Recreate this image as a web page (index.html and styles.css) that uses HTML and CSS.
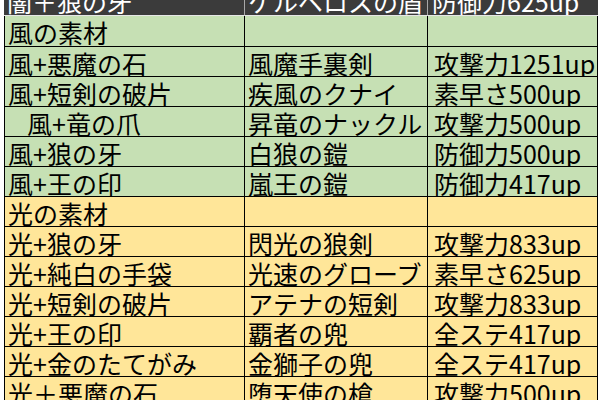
FILE: index.html
```html
<!DOCTYPE html>
<html lang="ja">
<head>
<meta charset="utf-8">
<title>素材表</title>
<link rel="stylesheet" href="styles.css">
</head>
<body>
<table class="sheet">
  <colgroup>
    <col class="c1"><col class="c2"><col class="c3">
  </colgroup>
  <thead>
    <tr class="head">
      <th>闇＋狼の牙</th><th>ケルベロスの盾</th><th class="stat">防御力625up</th>
    </tr>
  </thead>
  <tbody>
    <tr class="wind"><td>風の素材</td><td></td><td class="stat"></td></tr>
    <tr class="wind"><td>風+悪魔の石</td><td>風魔手裏剣</td><td class="stat">攻撃力1251up</td></tr>
    <tr class="wind"><td>風+短剣の破片</td><td>疾風のクナイ</td><td class="stat">素早さ500up</td></tr>
    <tr class="wind"><td class="indent">風+竜の爪</td><td>昇竜のナックル</td><td class="stat">攻撃力500up</td></tr>
    <tr class="wind"><td>風+狼の牙</td><td>白狼の鎧</td><td class="stat">防御力500up</td></tr>
    <tr class="wind"><td>風+王の印</td><td>嵐王の鎧</td><td class="stat">防御力417up</td></tr>
    <tr class="light"><td>光の素材</td><td></td><td class="stat"></td></tr>
    <tr class="light"><td>光+狼の牙</td><td>閃光の狼剣</td><td class="stat">攻撃力833up</td></tr>
    <tr class="light"><td>光+純白の手袋</td><td>光速のグローブ</td><td class="stat">素早さ625up</td></tr>
    <tr class="light"><td>光+短剣の破片</td><td>アテナの短剣</td><td class="stat">攻撃力833up</td></tr>
    <tr class="light"><td>光+王の印</td><td>覇者の兜</td><td class="stat">全ステ417up</td></tr>
    <tr class="light"><td>光+金のたてがみ</td><td>金獅子の兜</td><td class="stat">全ステ417up</td></tr>
    <tr class="light"><td>光＋悪魔の石</td><td>堕天使の槍</td><td class="stat">攻撃力500up</td></tr>
  </tbody>
</table>
</body>
</html>
```
FILE: styles.css
```css
html, body {
  margin: 0;
  padding: 0;
  background: #ffffff;
  overflow: hidden;
}

.sheet {
  table-layout: fixed;
  border-collapse: separate;
  border-spacing: 0;
  width: 594px;
  margin: -15px 0 0 4px;
  font-family: "Noto Sans CJK JP", sans-serif;
  font-size: 25px;
  color: #000;
}

.c1 { width: 241px; }
.c2 { width: 183px; }
.c3 { width: 170px; }

.sheet th,
.sheet td {
  padding: 3px 0 0 3px;
  line-height: 26px;
  font-weight: normal;
  text-align: left;
  vertical-align: top;
  white-space: nowrap;
  overflow: hidden;
}

.head { height: 31px; }

.head th {
  background: #3b3b3b;
  color: #ffffff;
  border-right: 1px solid #a8a8a8;
  border-bottom: 1px solid #e6e6e6;
}

.head th:last-child { border-right: none; }
.head th.stat { padding-left: 4px; }

tbody tr { height: 30px; }

tbody tr:first-child { height: 31px; }

tbody td {
  border-right: 1px solid #000;
  border-bottom: 1px solid #000;
}

tbody td:first-child { border-left: 1px solid #000; }

tbody td.stat { padding-left: 6px; }
tbody td.indent { padding-left: 22px; }

.wind td { background: #c6e0b4; }
.light td { background: #ffe699; }
```
